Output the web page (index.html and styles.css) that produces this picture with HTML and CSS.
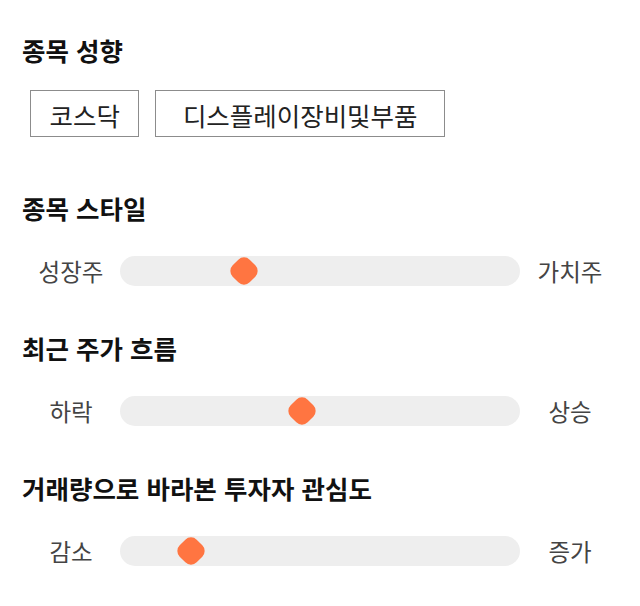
FILE: index.html
```html
<!DOCTYPE html>
<html lang="ko">
<head>
<meta charset="utf-8">
<link rel="stylesheet" href="styles.css">
</head>
<body>
<main class="page">
  <section class="section">
    <h2 class="title">종목 성향</h2>
    <div class="chips">
      <span class="chip">코스닥</span>
      <span class="chip chip-long">디스플레이장비및부품</span>
    </div>
  </section>
  <section class="section">
    <h2 class="title">종목 스타일</h2>
    <div class="slider">
      <span class="label">성장주</span>
      <div class="track"><span class="thumb" style="left: 31%"></span></div>
      <span class="label">가치주</span>
    </div>
  </section>
  <section class="section">
    <h2 class="title">최근 주가 흐름</h2>
    <div class="slider">
      <span class="label">하락</span>
      <div class="track"><span class="thumb" style="left: 45.5%"></span></div>
      <span class="label">상승</span>
    </div>
  </section>
  <section class="section">
    <h2 class="title">거래량으로 바라본 투자자 관심도</h2>
    <div class="slider">
      <span class="label">감소</span>
      <div class="track"><span class="thumb" style="left: 17.75%"></span></div>
      <span class="label">증가</span>
    </div>
  </section>
</main>
</body>
</html>
```
FILE: styles.css
```css
* { box-sizing: border-box; }
html, body { margin: 0; padding: 0; background: #fff; }
body {
  font-family: "Noto Sans CJK KR", "Noto Sans", sans-serif;
  color: #222;
}
.page {
  display: flex;
  flex-direction: column;
  padding: 35px 20px 0 22px;
}
.section {
  display: flex;
  flex-direction: column;
  gap: 33px;
}
.section + .section { margin-top: 47px; }
.section:first-child { gap: 25px; margin-bottom: 9px; }
.title {
  margin: 0;
  font-size: 25.5px;
  line-height: 30px;
  font-weight: 700;
  color: #111;
}
.chips {
  display: flex;
  gap: 16px;
  padding-left: 8px;
}
.chip {
  height: 47px;
  display: flex;
  align-items: center;
  padding: 2px 18.5px 0;
  border: 1px solid #8c8c8c;
  font-size: 25.5px;
  color: #222;
}
.chip-long { padding: 2px 26.5px 0; }
.slider {
  display: grid;
  grid-template-columns: 98px 400px 100px;
  align-items: center;
  height: 30px;
}
.label {
  text-align: center;
  font-size: 23.5px;
  color: #444;
  line-height: 30px;
}
.track {
  position: relative;
  height: 30px;
  background: #eeeeee;
  border-radius: 15px;
}
.thumb {
  position: absolute;
  top: 50%;
  width: 24px;
  height: 24px;
  background: #ff7541;
  border-radius: 8px;
  transform: translate(-50%, -50%) rotate(45deg);
}
```
